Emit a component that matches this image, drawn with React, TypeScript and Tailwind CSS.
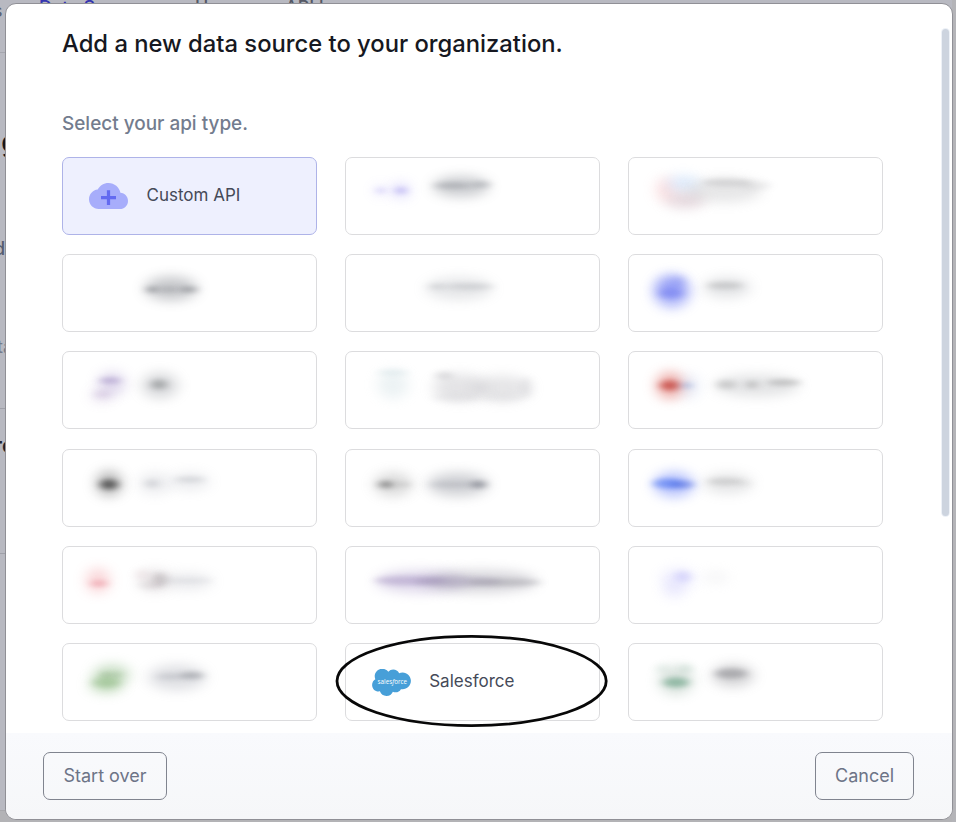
import React from 'react';

type Smudge = [cx: number, cy: number, rx: number, ry: number, color: string, opacity: number, core?: boolean];

const blurred: Smudge[][] = [
  [],
  [
    [35, 33, 5, 3, '#8f80f0', 0.3, true], [35, 33, 8, 8, '#a9a0f5', 0.16],
    [55, 33, 6, 3, '#7264e0', 0.4, true], [55, 33, 9, 10, '#a9a0f5', 0.35],
    [115, 29, 31, 12, '#8b8f97', 0.45], [106, 28, 19, 3, '#70747c', 0.32, true], [135, 27, 10, 3, '#70747c', 0.32, true],
  ],
  [
    [37, 32, 11, 14, '#f4a9ad', 0.34], [54, 26, 18, 10, '#bcd8fb', 0.45], [56, 43, 22, 9, '#cdb2bd', 0.5],
    [95, 33, 42, 14, '#b5b5b8', 0.32], [98, 25, 25, 4, '#8f8f92', 0.25, true], [126, 28, 16, 5, '#a5a5a8', 0.16, true],
  ],
  [
    [108, 34, 29, 14, '#85888f', 0.46], [89, 35, 6, 2.5, '#4b4e55', 0.5, true],
    [106, 35, 9, 2.5, '#5a5d64', 0.25, true], [126, 35, 9, 2.5, '#4b4e55', 0.42, true],
  ],
  [
    [113, 34, 37, 13, '#9a9ea6', 0.25], [91, 32, 9, 2.5, '#777b82', 0.22, true], [124, 32, 24, 3, '#777b82', 0.22, true],
  ],
  [
    [43, 37, 20, 20, '#8490f7', 0.55], [42, 34, 15, 12, '#707cf2', 0.5], [42, 39, 12, 5, '#5864ea', 0.32, true], [50, 27, 6, 6, '#6672ea', 0.2, true],
    [98, 33, 26, 12, '#9b9fa7', 0.28], [96, 31, 18, 3.5, '#777', 0.26, true],
  ],
  [
    [49, 32, 15, 14, '#b4a4d4', 0.4], [47, 29, 11, 3, '#8068ae', 0.4, true], [39, 44, 12, 8, '#b7a0cc', 0.3], [39, 43, 8, 4, '#a68abc', 0.18, true],
    [97, 34, 20, 15, '#94979e', 0.36], [96, 33, 8, 5, '#65696a', 0.42, true],
  ],
  [
    [47, 33, 17, 17, '#cadce0', 0.35], [47, 21, 16, 3, '#a9c5cc', 0.22, true],
    [114, 36, 30, 16, '#b5b4ba', 0.36], [156, 37, 32, 15, '#b5b4ba', 0.34], [98, 24, 9, 4, '#96969c', 0.25, true],
    [110, 46, 24, 5, '#b4b4ba', 0.14, true], [158, 46, 20, 5, '#b4b4ba', 0.1, true], [180, 36, 5, 11, '#acacb4', 0.2, true],
  ],
  [
    [41, 34, 15, 16, '#dd635c', 0.52], [41, 34, 10, 5, '#b82820', 0.6, true], [60, 35, 10, 14, '#a6b5df', 0.28], [58, 34, 5, 2.5, '#6186cb', 0.45, true],
    [128, 34, 47, 13, '#aeb0b4', 0.34], [97, 33, 10, 4.5, '#777', 0.26, true], [123, 33, 6, 4, '#777', 0.32, true], [155, 31, 17, 3, '#777', 0.36, true],
  ],
  [
    [46, 34, 14, 15, '#777', 0.52], [46, 35, 9, 5, '#222', 0.62, true],
    [92, 34, 18, 13, '#b2b5bf', 0.24], [89, 34, 7, 4, '#777b86', 0.22, true], [127, 32, 22, 11, '#b2b5bf', 0.24], [127, 30, 15, 2.5, '#777b86', 0.24, true],
  ],
  [
    [47, 35, 21, 14, '#a1a1a1', 0.38], [40, 35, 8, 3.5, '#454545', 0.5, true], [58, 35, 7, 2.5, '#777', 0.22, true],
    [112, 35, 34, 14, '#9699a2', 0.44], [108, 35, 26, 3, '#898c96', 0.24, true], [133, 35, 8, 3.5, '#505461', 0.48, true],
  ],
  [
    [45, 35, 22, 15, '#8295fa', 0.56], [38, 34, 14, 5, '#416df0', 0.52, true], [53, 35, 12, 4, '#3658d9', 0.46, true],
    [99, 34, 27, 12, '#adafb3', 0.3], [96, 32, 18, 3.5, '#888', 0.26, true], [116, 34, 7, 3, '#999', 0.12, true],
  ],
  [
    [35, 34, 13, 15, '#f3a0a6', 0.42], [36, 37, 9, 3, '#df6375', 0.38, true],
    [92, 34, 18, 13, '#bcb3b8', 0.34], [97, 33, 7, 7, '#8e8387', 0.32, true], [88, 39, 12, 4, '#9d9096', 0.15, true], [79, 28, 7, 6, '#d9bcc1', 0.2, true],
    [125, 35, 27, 10, '#b8b9c3', 0.28], [124, 34, 26, 2.5, '#a1a4ac', 0.18, true],
  ],
  [
    [75, 35, 50, 13, '#b9abd3', 0.48], [135, 35, 62, 13, '#aaa8b3', 0.48],
    [64, 34, 36, 4.5, '#9681b6', 0.36, true], [112, 35, 44, 5, '#9185a8', 0.3, true], [158, 36, 38, 3.5, '#8c8b93', 0.36, true],
  ],
  [
    [49, 32, 18, 12, '#c4c2fb', 0.3], [54, 30, 8, 6, '#b0adf8', 0.34, true], [45, 43, 12, 10, '#c8c5fa', 0.32], [87, 31, 14, 7, '#d8d8dc', 0.25],
  ],
  [
    [49, 31, 20, 12, '#9bc394', 0.5], [43, 41, 18, 10, '#8dbb82', 0.5], [43, 39, 14, 5, '#77a968', 0.3, true], [43, 31, 4, 1.6, '#416b34', 0.45, true], [54, 31, 4, 1.6, '#416b34', 0.38, true],
    [114, 34, 32, 15, '#a6a9b3', 0.36], [108, 33, 14, 3, '#797d88', 0.22, true], [129, 32, 12, 3.5, '#62666f', 0.38, true],
  ],
  [],
  [
    [47, 37, 19, 17, '#a8bdb1', 0.44], [47, 39, 13, 5, '#4f9270', 0.5, true], [57, 25, 7, 5, '#7aab91', 0.18, true], [33, 25, 7, 5, '#7aab91', 0.12, true],
    [104, 32, 23, 13, '#9c9ca1', 0.44], [102, 30, 16, 5, '#68686e', 0.38, true],
  ],
];

function BlurredContent({ items }: { items: Smudge[] }) {
  return (
    <svg className="block h-full w-full" aria-hidden="true">
      {items.map(([cx, cy, rx, ry, color, opacity, core], i) => (
        <ellipse
          key={i}
          cx={cx}
          cy={cy - 0.5}
          rx={core ? rx : rx * 0.9}
          ry={core ? ry : ry * 0.85}
          fill={color}
          opacity={opacity}
          filter={core ? 'url(#core)' : 'url(#halo)'}
        />
      ))}
    </svg>
  );
}

function CloudPlus() {
  return (
    <svg className="h-[26px] w-[39px] shrink-0" viewBox="0 4 24 16">
      <path fill="#a7adfb" d="M19.35 10.04C18.67 6.59 15.64 4 12 4 9.11 4 6.6 5.64 5.35 8.04 2.34 8.36 0 10.91 0 14c0 3.31 2.69 6 6 6h13c2.76 0 5-2.24 5-5 0-2.64-2.05-4.78-4.65-4.96z" />
      <path stroke="#636af0" strokeWidth="2" d="M12 8.4v9.2M7.4 13h9.2" />
    </svg>
  );
}

function SalesforceLogo() {
  return (
    <svg className="h-[27px] w-[39px] shrink-0" viewBox="0 3.75 24 16.7">
      <path fill="#479fd8" d="M10.006 5.415a4.195 4.195 0 013.045-1.306c1.56 0 2.954.9 3.69 2.205.63-.3 1.35-.45 2.1-.45 2.85 0 5.159 2.34 5.159 5.22s-2.31 5.22-5.176 5.22c-.345 0-.69-.044-1.02-.104a3.75 3.75 0 01-3.3 1.95c-.6 0-1.155-.15-1.65-.375A4.314 4.314 0 018.88 20.4a4.302 4.302 0 01-4.05-2.82c-.27.062-.54.076-.825.076-2.204 0-4.005-1.8-4.005-4.05 0-1.5.811-2.805 2.01-3.51-.255-.57-.39-1.2-.39-1.846 0-2.58 2.1-4.65 4.65-4.65 1.53 0 2.85.705 3.72 1.8" />
      <text x="3.4" y="12.9" fill="white" fontSize="4.1" fontFamily="Open Sans, sans-serif" fontWeight="500" textLength="18.2" lengthAdjust="spacingAndGlyphs">
        sales<tspan fontStyle="italic">f</tspan>orce
      </text>
    </svg>
  );
}

function Card({ index }: { index: number }) {
  if (index === 0) {
    return (
      <button className="flex items-center gap-[18.5px] rounded-[7px] border border-[#aeb3e8] bg-[#eef0fe] pl-[26px] text-[17px] text-[#454a58]">
        <CloudPlus />
        <span>Custom API</span>
      </button>
    );
  }
  if (index === 16) {
    return (
      <button className="relative flex items-center gap-[18px] rounded-[7px] border border-[#dcdcde] pl-[26px] text-[17px] text-[#454a58]">
        <SalesforceLogo />
        <span>Salesforce</span>
        <svg className="absolute -left-[11px] -top-[10px] h-[94px] w-[274px]" viewBox="0 0 274 94">
          <ellipse cx="136.6" cy="47" rx="134.6" ry="44.6" fill="none" stroke="#080808" strokeWidth="2.8" />
        </svg>
      </button>
    );
  }
  return (
    <div className="overflow-hidden rounded-[7px] border border-[#dcdcde]">
      <BlurredContent items={blurred[index]} />
    </div>
  );
}

function PageBehind() {
  return (
    <div className="flex h-full flex-col border-r-4 border-[#b4b4b8] bg-[#b8b9c1] whitespace-nowrap">
      <nav className="flex h-[53px] items-start border-b border-[#a5a6ae] text-[18px] font-medium leading-[18px] text-[#555966]">
        <span className="-ml-[7px] w-[46px] pt-[2px] font-normal text-[#596273]">s</span>
        <span className="w-[156px] -mt-px text-[#3535b0]">Data Sources</span>
        <span className="w-[90px] -mt-px">Users</span>
        <span className="-mt-px">API keys</span>
      </nav>
      <div className="flex h-[356px] w-[6px] flex-col overflow-hidden border-b border-[#9fa0a8]">
        <span className="-ml-[16px] mt-[68px] h-[114px] text-[28px] font-semibold leading-[42px] text-[#15171e]">ng</span>
        <span className="-ml-[6px] h-[98px] text-[18px] font-medium leading-[28px] text-[#555d70]">d</span>
        <span className="-ml-[3px] text-[18px] leading-[28px] text-[#747b8b]">ta</span>
      </div>
      <div className="h-[145px] w-[6px] overflow-hidden border-b border-[#9fa0a8] pt-[21px] text-[21px] font-semibold leading-[32px] text-[#20232c]">
        <span className="-ml-[6px]">ro</span>
      </div>
      <div className="mt-auto h-[12px] border-t border-[#a8a8ac] bg-[#b3b3b6]" />
    </div>
  );
}

export default function App() {
  return (
    <div className="relative h-[822px] w-[956px] overflow-hidden font-['Inter',sans-serif]">
      <svg className="absolute h-0 w-0">
        <defs>
          <filter id="halo" x="-100%" y="-200%" width="300%" height="500%" colorInterpolationFilters="sRGB">
            <feGaussianBlur stdDeviation="7 6" />
          </filter>
          <filter id="core" x="-200%" y="-400%" width="500%" height="900%" colorInterpolationFilters="sRGB">
            <feGaussianBlur stdDeviation="4 2.6" />
          </filter>
        </defs>
      </svg>
      <PageBehind />
      <div className="absolute inset-0 flex pt-[3px] pr-[3px] pb-[2px] pl-[5px]">
        <div className="flex flex-1 flex-col overflow-hidden rounded-[11px] border border-[#909096] bg-white">
          <div className="flex flex-1 items-start justify-between pr-[3px] pl-[56px]">
            <main className="w-[821px]">
              <h1 className="pt-[22px] text-[23.77px] font-medium leading-[36px] text-[#161821]">Add a new data source to your organization.</h1>
              <h2 className="mt-[47px] text-[18.95px] font-medium leading-[30px] text-[#737c8e]">Select your api type.</h2>
              <div className="mt-[17.5px] grid grid-cols-3 grid-rows-[repeat(6,78px)] gap-x-[28.6px] gap-y-[19.35px]">
                {blurred.map((_, i) => (
                  <Card key={i} index={i} />
                ))}
              </div>
            </main>
            <div className="mt-[25px] h-[487px] w-[7px] rounded-full bg-[#cdd4df] ring-1 ring-[#edf1f7]" />
          </div>
          <footer className="flex h-[86px] shrink-0 items-center justify-between bg-linear-to-b from-[#f9fafd] to-[#f6f7f9] pr-[38px] pb-px pl-[37px] text-[18px] text-[#6d7487]">
            <button className="h-[48px] w-[124px] rounded-[7px] border border-[#80848f]">Start over</button>
            <button className="h-[48px] w-[99px] rounded-[7px] border border-[#80848f]">Cancel</button>
          </footer>
        </div>
      </div>
    </div>
  );
}
